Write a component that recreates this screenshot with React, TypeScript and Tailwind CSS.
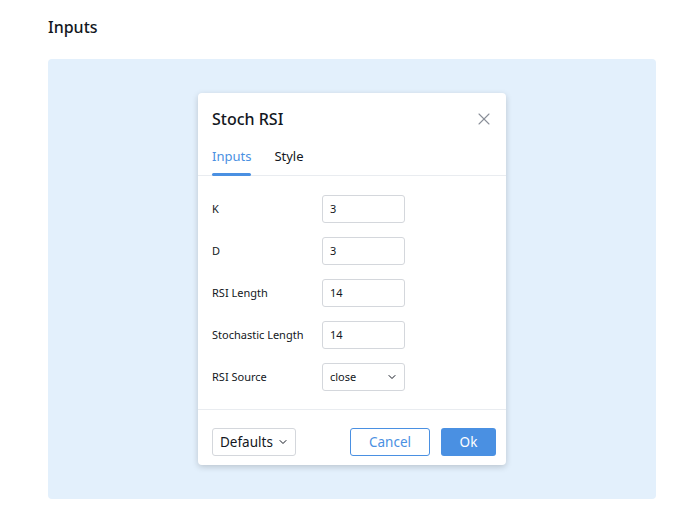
import { ChevronDown, X } from 'lucide-react';

const rows = [
  { label: 'K', value: '3' },
  { label: 'D', value: '3' },
  { label: 'RSI Length', value: '14' },
  { label: 'Stochastic Length', value: '14' },
];

export default function App() {
  return (
    <div className="w-[690px] h-[514px] bg-white font-['Noto_Sans',sans-serif] text-[#131722]">
      <div className="pl-12 pt-[15px] h-[59px]">
        <h2 className="text-[16px] font-medium leading-6">Inputs</h2>
      </div>
      <div className="ml-12 w-[608px] h-[440px] rounded bg-[#e3f0fc] pt-[34px] flex justify-center">
        <div className="w-[308px] h-[372px] bg-white rounded shadow-[0_2px_6px_rgba(0,0,0,0.18)] flex flex-col">
          <div className="flex items-center justify-between pl-[14px] pr-[12px] pt-[1px] h-[50px]">
            <span className="text-[16px] font-medium">Stoch RSI</span>
            <X className="w-[20px] h-[20px] text-[#8a8f99]" strokeWidth={1.3} />
          </div>
          <div className="flex gap-[23px] px-[14px] h-[33px] border-b border-[#e9ecf0] text-[13px]">
            <div className="relative text-[#4a90e2] pt-[4px]">
              Inputs
              <div className="absolute left-0 right-0 bottom-[-1px] h-[3px] rounded-full bg-[#4a90e2]" />
            </div>
            <div className="pt-[4px]">Style</div>
          </div>
          <div className="flex flex-col gap-[14px] px-[14px] pt-[19px] h-[234px] border-b border-[#e9ecf0] text-[11px]">
            {rows.map((r) => (
              <div key={r.label} className="flex items-center h-[28px]">
                <span className="w-[110px]">{r.label}</span>
                <div className="w-[83px] h-[28px] border border-[#d4d7dc] rounded-[3px] flex items-center px-[7px]">
                  {r.value}
                </div>
              </div>
            ))}
            <div className="flex items-center h-[28px]">
              <span className="w-[110px]">RSI Source</span>
              <div className="w-[83px] h-[28px] border border-[#d4d7dc] rounded-[3px] flex items-center justify-between pl-[7px] pr-[6px]">
                close
                <ChevronDown className="w-[12px] h-[12px]" strokeWidth={2} />
              </div>
            </div>
          </div>
          <div className="flex items-center pl-[14px] pr-[10px] pt-[9px] flex-1 text-[13.5px]">
            <div className="w-[84px] h-[28px] border border-[#d4d7dc] rounded-[3px] flex items-center justify-between pl-[7px] pr-[6px]">
              Defaults
              <ChevronDown className="w-[12px] h-[12px]" strokeWidth={2} />
            </div>
            <div className="ml-auto w-[80px] h-[28px] border border-[#4a90e2] rounded-[3px] flex items-center justify-center text-[#4a90e2]">
              Cancel
            </div>
            <div className="ml-[11px] w-[55px] h-[28px] rounded-[3px] bg-[#4a90e2] text-white flex items-center justify-center">
              Ok
            </div>
          </div>
        </div>
      </div>
    </div>
  );
}
